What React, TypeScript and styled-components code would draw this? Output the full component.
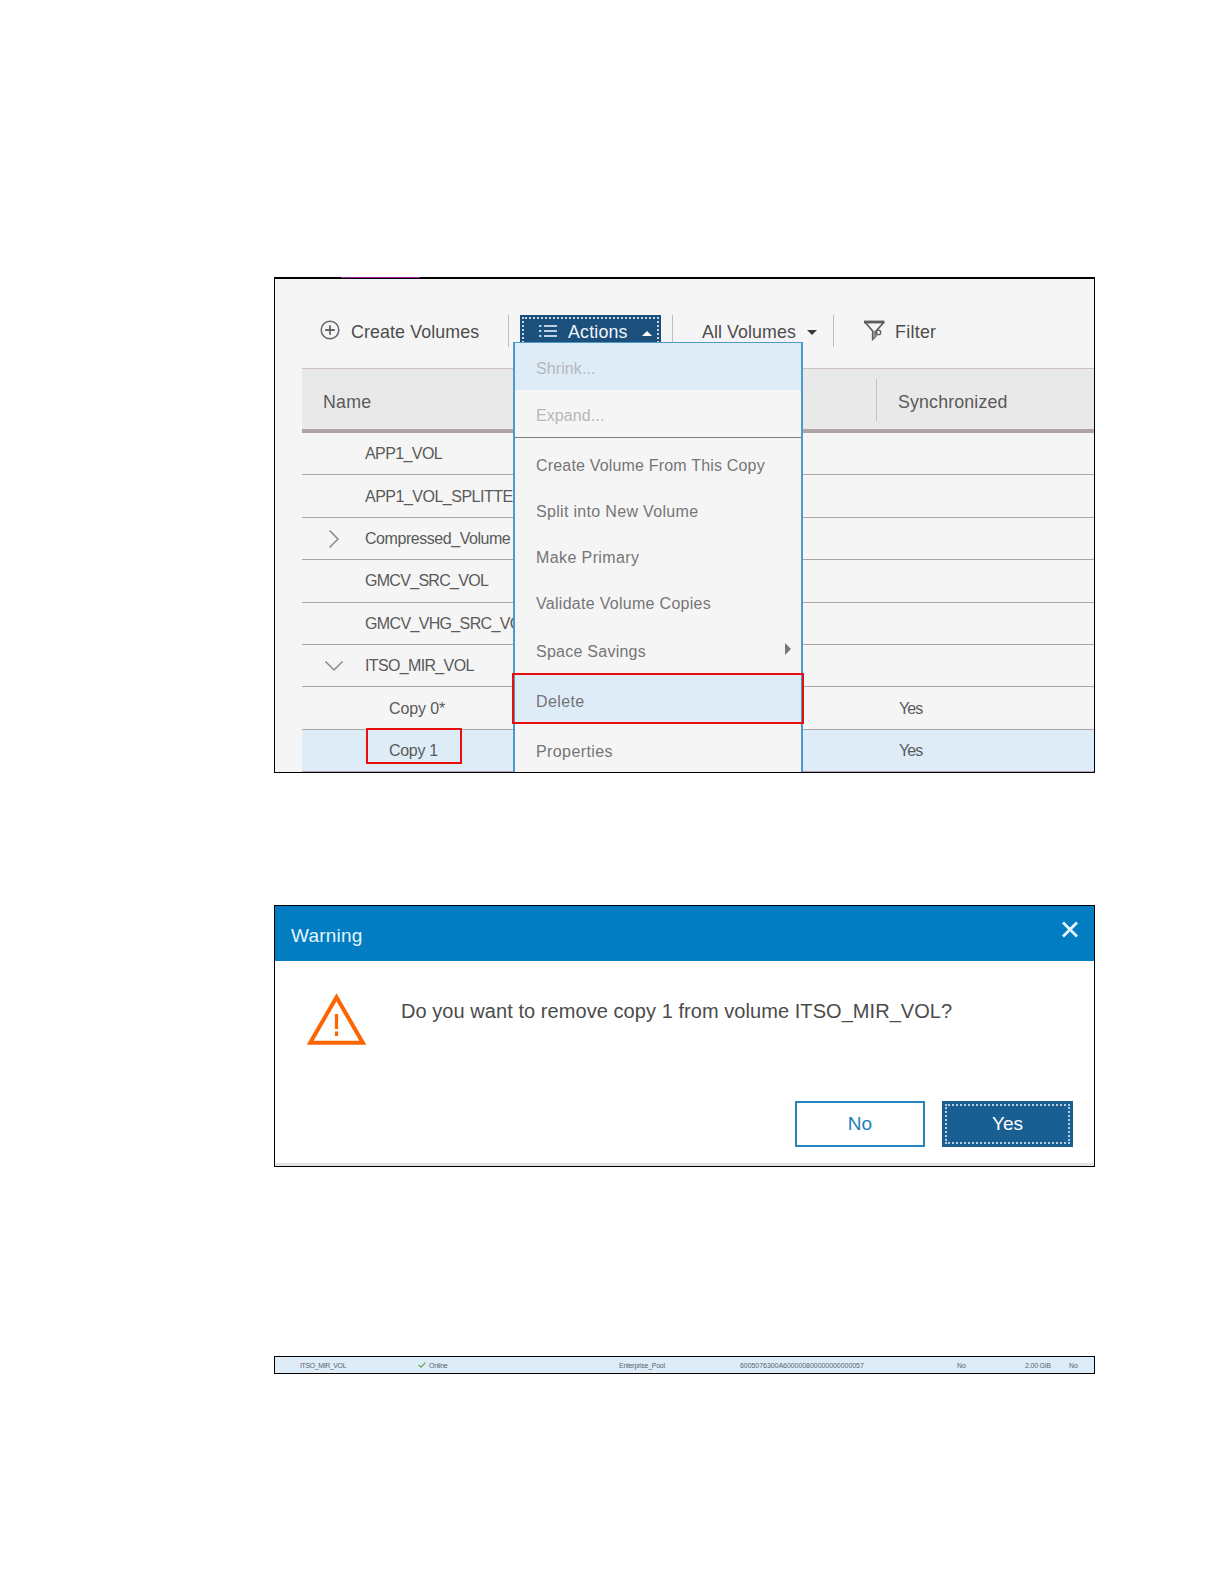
import * as React from "react";
import styled, { createGlobalStyle } from "styled-components";

const GlobalStyle = createGlobalStyle`
  * {
    box-sizing: border-box;
  }

  body {
    margin: 0;
    background: #ffffff;
    font-family: "Liberation Sans", Arial, sans-serif;
    color: #5a5a5a;
  }
`;

const Page = styled.div`
  width: 1224px;
  height: 1584px;
  padding: 277px 129px 0 274px;
  overflow: hidden;
`;

interface TextProps {
  $spacing?: number;
}

const Text = styled.span<TextProps>`
  white-space: nowrap;
  letter-spacing: ${props => props.$spacing || 0}px;
`;

// Volumes panel
const VolumesPanel = styled.section`
  position: relative;
  height: 496px;
  border: 1px solid #000;
  border-top-width: 2px;
  background: #f5f5f5;
`;

const TabAccent = styled.div`
  position: absolute;
  top: -2px;
  left: 66px;
  width: 79px;
  height: 1px;
  background: #a32ba3;
`;

const Toolbar = styled.div`
  display: flex;
  height: 89px;
  padding: 36px 0 0 45px;
  font-size: 17.8px;
  color: #4c4c4c;
`;

const ToolbarItem = styled.div<{ $width?: number; $indent?: number; $gap?: number }>`
  display: flex;
  align-items: center;
  gap: ${props => props.$gap || 0}px;
  width: ${props => (props.$width ? props.$width + "px" : "auto")};
  height: 32px;
  padding-left: ${props => props.$indent || 0}px;

  & > svg {
    flex: none;
    margin-top: -2px;
  }

  & > span {
    padding-top: 2px;
  }
`;

const ToolbarSeparator = styled.div`
  width: 1px;
  height: 32px;
  background: #bdbdbd;
`;

const ActionsButton = styled.div`
  width: 141px;
  height: 34px;
  margin: 0 11px;
  padding: 2px;
  background: #1b4f7c;
  color: #f2f6fa;
`;

const ActionsFocus = styled.div`
  display: flex;
  align-items: center;
  height: 30px;
  padding-left: 15px;
  border: 2px dotted #c3d5e4;

  & > svg {
    margin-top: -3px;
  }

  & > span {
    margin: 0 14px 0 11px;
  }
`;

const Caret = styled.i<{ $dir: "up" | "down" | "right" }>`
  width: 0;
  height: 0;
  border: 5px solid transparent;
  ${props =>
    props.$dir === "up" &&
    "border-width: 0 5px 5px; border-bottom-color: #fff; margin-top: 2px;"}
  ${props =>
    props.$dir === "down" &&
    "border-width: 5px 5px 0; border-top-color: #3c3c3c; margin: 3px 0 0 11px;"}
  ${props =>
    props.$dir === "right" &&
    "border-width: 6px 0 6px 6px; border-left-color: #777;"}
`;

const Table = styled.div`
  margin-left: 27px;
`;

const TableHeader = styled.div`
  display: grid;
  grid-template-columns: 574px 1fr;
  align-items: center;
  height: 65px;
  padding-top: 2px;
  border-top: 1px solid #cdbfc0;
  border-bottom: 4px solid #b2a3a4;
  background: #e9e9e9;
  font-size: 17.8px;
`;

const HeaderCell = styled.div<{ $indent: number; $divided?: boolean }>`
  display: flex;
  align-items: center;
  height: 42px;
  padding: 4px 0 0 ${props => props.$indent}px;
  border-left: ${props => (props.$divided ? "1px solid #c4c4c4" : "none")};
`;

const TableRow = styled.div<{ $selected?: boolean }>`
  display: grid;
  grid-template-columns: 63px 534px 1fr;
  align-items: center;
  height: 42.4px;
  padding-top: 1.2px;
  border-bottom: 1px solid ${props => (props.$selected ? "#b8a0ae" : "#aea5a6")};
  background: ${props => (props.$selected ? "#deecf7" : "transparent")};
  font-size: 16px;
`;

const Expander = styled.div`
  display: flex;
  justify-content: center;
`;

const NameCell = styled.div<{ $child?: boolean }>`
  display: flex;
  padding-left: ${props => (props.$child ? 24 : 0)}px;
`;

const Callout = styled.div`
  position: absolute;
  border: 2px solid #e80e10;
`;

const CopyCallout = styled(Callout)`
  left: 91px;
  top: 449px;
  width: 96px;
  height: 36px;
`;

// Actions menu, lies over the table
const Menu = styled.div`
  position: absolute;
  top: 63px;
  left: 238px;
  width: 290px;
  height: 430px;
  border: 2px solid #4c9bcb;
  border-width: 1px 2px 0;
  background: #f5f5f5;
  font-size: 16px;
`;

const MenuItem = styled.div<{
  $height: number;
  $drop?: number;
  $active?: boolean;
  $disabled?: boolean;
}>`
  position: relative;
  display: flex;
  align-items: center;
  justify-content: space-between;
  height: ${props => props.$height}px;
  padding: ${props => props.$drop || 0}px 10px 0 21px;
  background: ${props => (props.$active ? "#deecf8" : "transparent")};
  color: ${props => (props.$disabled ? "#b4b8bb" : "#757575")};

  & > i {
    margin-top: -6px;
  }
`;

const MenuSeparator = styled.div`
  height: 1px;
  margin-bottom: 4px;
  background: #7f7f7f;
`;

const DeleteCallout = styled(Callout)`
  inset: 0 -3px;
`;

// Warning dialog
const Dialog = styled.section`
  height: 262px;
  margin-top: 132px;
  border: 1px solid #000;
  background: #fff;
  box-shadow: inset 0 -3px 0 #e3e3e3;
`;

const DialogTitle = styled.header`
  display: flex;
  justify-content: space-between;
  height: 55px;
  padding: 14px 15px 0 16px;
  background: #037dc1;
  color: #e6f4fc;
  font-size: 19px;
  line-height: 31px;
`;

const DialogBody = styled.div`
  display: flex;
  height: 140px;
  padding: 32px 0 0 31px;
  color: #4b4b4b;
  font-size: 20px;
  line-height: 37px;

  & > span {
    padding-left: 35px;
  }
`;

const DialogFooter = styled.footer`
  display: flex;
  justify-content: flex-end;
  gap: 17px;
  padding-right: 21px;
`;

const DialogButton = styled.button<{ $primary?: boolean }>`
  width: ${props => (props.$primary ? 131 : 130)}px;
  height: 46px;
  padding: ${props => (props.$primary ? "3px" : 0)};
  border: ${props => (props.$primary ? "none" : "2px solid #2486bd")};
  background: ${props => (props.$primary ? "#195f92" : "#fff")};
  color: ${props => (props.$primary ? "#fff" : "#1c7fb9")};
  font-family: inherit;
  font-size: 19px;
`;

const ButtonFocus = styled.span`
  display: flex;
  align-items: center;
  justify-content: center;
  height: 100%;
  border: 2px dotted #b4cfe1;
`;

// Single result row
const ResultRow = styled.section`
  display: grid;
  grid-template-columns: 118px 201px 121px 217px 68px 44px 1fr;
  align-items: center;
  height: 18px;
  margin-top: 189px;
  padding-left: 25px;
  border: 1px solid #000;
  background: #deecf7;
  color: #59656e;
  font-size: 7px;
`;

const StatusCell = styled.div`
  display: flex;
  align-items: center;
  gap: 3px;
`;

const AddIcon = () => (
  <svg width="20" height="20" viewBox="0 0 20 20" fill="none" stroke="#666">
    <circle cx="10" cy="10" r="8.8" strokeWidth="1.5" />
    <path d="M10 5.2v9.6M5.2 10h9.6" strokeWidth="1.8" />
  </svg>
);

const ListIcon = () => (
  <svg width="18" height="16" viewBox="0 0 18 16" stroke="#b9d0e2" fill="none">
    <path d="M5 3h13M5 8h13M5 13h13" strokeWidth="1.8" />
    <path d="M0 3h2.4M0 8h2.4M0 13h2.4" strokeWidth="2.2" />
  </svg>
);

const FilterIcon = () => (
  <svg width="21" height="21" viewBox="0 0 21 21" fill="none" stroke="#5d5d5d">
    <path d="M0 2h20.5" strokeWidth="2.8" />
    <path d="M1.3 2.5 8.7 11v8.2l3.4-3.1M19.6 2.5 12.5 10.6v5" strokeWidth="1.7" />
    <path d="M9.3 11v8l3-2.9V10.5z" fill="#8b8b8b" stroke="none" />
    <circle cx="14.4" cy="12.4" r="2.3" strokeWidth="1.3" />
  </svg>
);

const Chevron = ({ open }: { open?: boolean }) => (
  <svg width="20" height="20" viewBox="0 0 20 20" fill="none" stroke="#8a8a8a" strokeWidth="1.5">
    <path d={open ? "M1.5 5.5 10 14l8.5-8.5" : "M5.5 1.5 14 10l-8.5 8.5"} />
  </svg>
);

const WarningIcon = () => (
  <svg width="60" height="54" viewBox="0 0 60 54" fill="none" stroke="#fd6500">
    <path d="M30.5 4.2 4.2 49.7h52.6z" strokeWidth="4" />
    <path d="M30.5 21v15M30.5 38.5v4.5" strokeWidth="3.2" />
  </svg>
);

const CloseIcon = () => (
  <svg width="18" height="19" viewBox="0 0 18 19" stroke="#e9f6fd" strokeWidth="2.8">
    <path d="m2 2.5 14 14M16 2.5l-14 14" />
  </svg>
);

const CheckIcon = () => (
  <svg width="8" height="6" viewBox="0 0 8 6" fill="none" stroke="#5fa83c" strokeWidth="1.2">
    <path d="M.6 3 3 5.1 7.4.6" />
  </svg>
);

interface VolumeRow {
  name: string;
  spacing: number;
  child?: boolean;
  open?: boolean;
  expandable?: boolean;
  selected?: boolean;
  sync?: string;
}

const volumes: VolumeRow[] = [
  { name: "APP1_VOL", spacing: -0.6 },
  { name: "APP1_VOL_SPLITTE", spacing: -0.5 },
  { name: "Compressed_Volume", spacing: -0.45, expandable: true },
  { name: "GMCV_SRC_VOL", spacing: -0.7 },
  { name: "GMCV_VHG_SRC_VO", spacing: -0.65 },
  { name: "ITSO_MIR_VOL", spacing: -0.65, expandable: true, open: true },
  { name: "Copy 0*", spacing: -0.1, child: true, sync: "Yes" },
  { name: "Copy 1", spacing: -0.3, child: true, sync: "Yes", selected: true }
];

const copyActions = [
  { label: "Create Volume From This Copy", spacing: 0.18, drop: 1 },
  { label: "Split into New Volume", spacing: 0.32, drop: 1 },
  { label: "Make Primary", spacing: 0.4, drop: 2 },
  { label: "Validate Volume Copies", spacing: 0.29, drop: 2 }
];

const ActionsMenu = () => (
  <Menu>
    <MenuItem $height={47} $drop={4} $active $disabled>
      <Text $spacing={0.1}>Shrink...</Text>
    </MenuItem>
    <MenuItem $height={47} $drop={5} $disabled>
      <Text $spacing={0.1}>Expand...</Text>
    </MenuItem>
    <MenuSeparator />
    {copyActions.map(action => (
      <MenuItem key={action.label} $height={46} $drop={action.drop}>
        <Text $spacing={action.spacing}>{action.label}</Text>
      </MenuItem>
    ))}
    <MenuItem $height={47} $drop={4}>
      <Text $spacing={0.25}>Space Savings</Text>
      <Caret $dir="right" />
    </MenuItem>
    <MenuItem $height={51} $drop={7} $active>
      <Text $spacing={0.4}>Delete</Text>
      <DeleteCallout />
    </MenuItem>
    <MenuItem $height={48} $drop={8}>
      <Text $spacing={0.4}>Properties</Text>
    </MenuItem>
  </Menu>
);

const Volumes = () => (
  <VolumesPanel>
    <TabAccent />
    <Toolbar>
      <ToolbarItem $width={188} $gap={11}>
        <AddIcon />
        <Text $spacing={0.12}>Create Volumes</Text>
      </ToolbarItem>
      <ToolbarSeparator />
      <ActionsButton>
        <ActionsFocus>
          <ListIcon />
          <Text $spacing={0.2}>Actions</Text>
          <Caret $dir="up" />
        </ActionsFocus>
      </ActionsButton>
      <ToolbarSeparator />
      <ToolbarItem $width={160} $indent={29}>
        <Text $spacing={0.1}>All Volumes</Text>
        <Caret $dir="down" />
      </ToolbarItem>
      <ToolbarSeparator />
      <ToolbarItem $indent={30} $gap={10}>
        <FilterIcon />
        <Text $spacing={0.3}>Filter</Text>
      </ToolbarItem>
    </Toolbar>
    <Table>
      <TableHeader>
        <HeaderCell $indent={21}>
          <Text $spacing={0.2}>Name</Text>
        </HeaderCell>
        <HeaderCell $indent={21} $divided>
          <Text $spacing={0.15}>Synchronized</Text>
        </HeaderCell>
      </TableHeader>
      {volumes.map(volume => (
        <TableRow key={volume.name} $selected={volume.selected}>
          <Expander>{volume.expandable && <Chevron open={volume.open} />}</Expander>
          <NameCell $child={volume.child}>
            <Text $spacing={volume.spacing}>{volume.name}</Text>
          </NameCell>
          <Text $spacing={-0.9}>{volume.sync}</Text>
        </TableRow>
      ))}
    </Table>
    <CopyCallout />
    <ActionsMenu />
  </VolumesPanel>
);

const WarningDialog = () => (
  <Dialog>
    <DialogTitle>
      <Text $spacing={0.2}>Warning</Text>
      <CloseIcon />
    </DialogTitle>
    <DialogBody>
      <WarningIcon />
      <Text $spacing={0.06}>Do you want to remove copy 1 from volume ITSO_MIR_VOL?</Text>
    </DialogBody>
    <DialogFooter>
      <DialogButton>No</DialogButton>
      <DialogButton $primary>
        <ButtonFocus>Yes</ButtonFocus>
      </DialogButton>
    </DialogFooter>
  </Dialog>
);

export default function App() {
  return (
    <React.Fragment>
      <GlobalStyle />
      <Page>
        <Volumes />
        <WarningDialog />
        <ResultRow>
          <Text $spacing={-0.4}>ITSO_MIR_VOL</Text>
          <StatusCell>
            <CheckIcon />
            <Text $spacing={-0.3}>Online</Text>
          </StatusCell>
          <Text $spacing={-0.27}>Enterprise_Pool</Text>
          <Text $spacing={-0.05}>6005076300A600000800000000000057</Text>
          <Text>No</Text>
          <Text $spacing={-0.2}>2.00 GiB</Text>
          <Text>No</Text>
        </ResultRow>
      </Page>
    </React.Fragment>
  );
}
